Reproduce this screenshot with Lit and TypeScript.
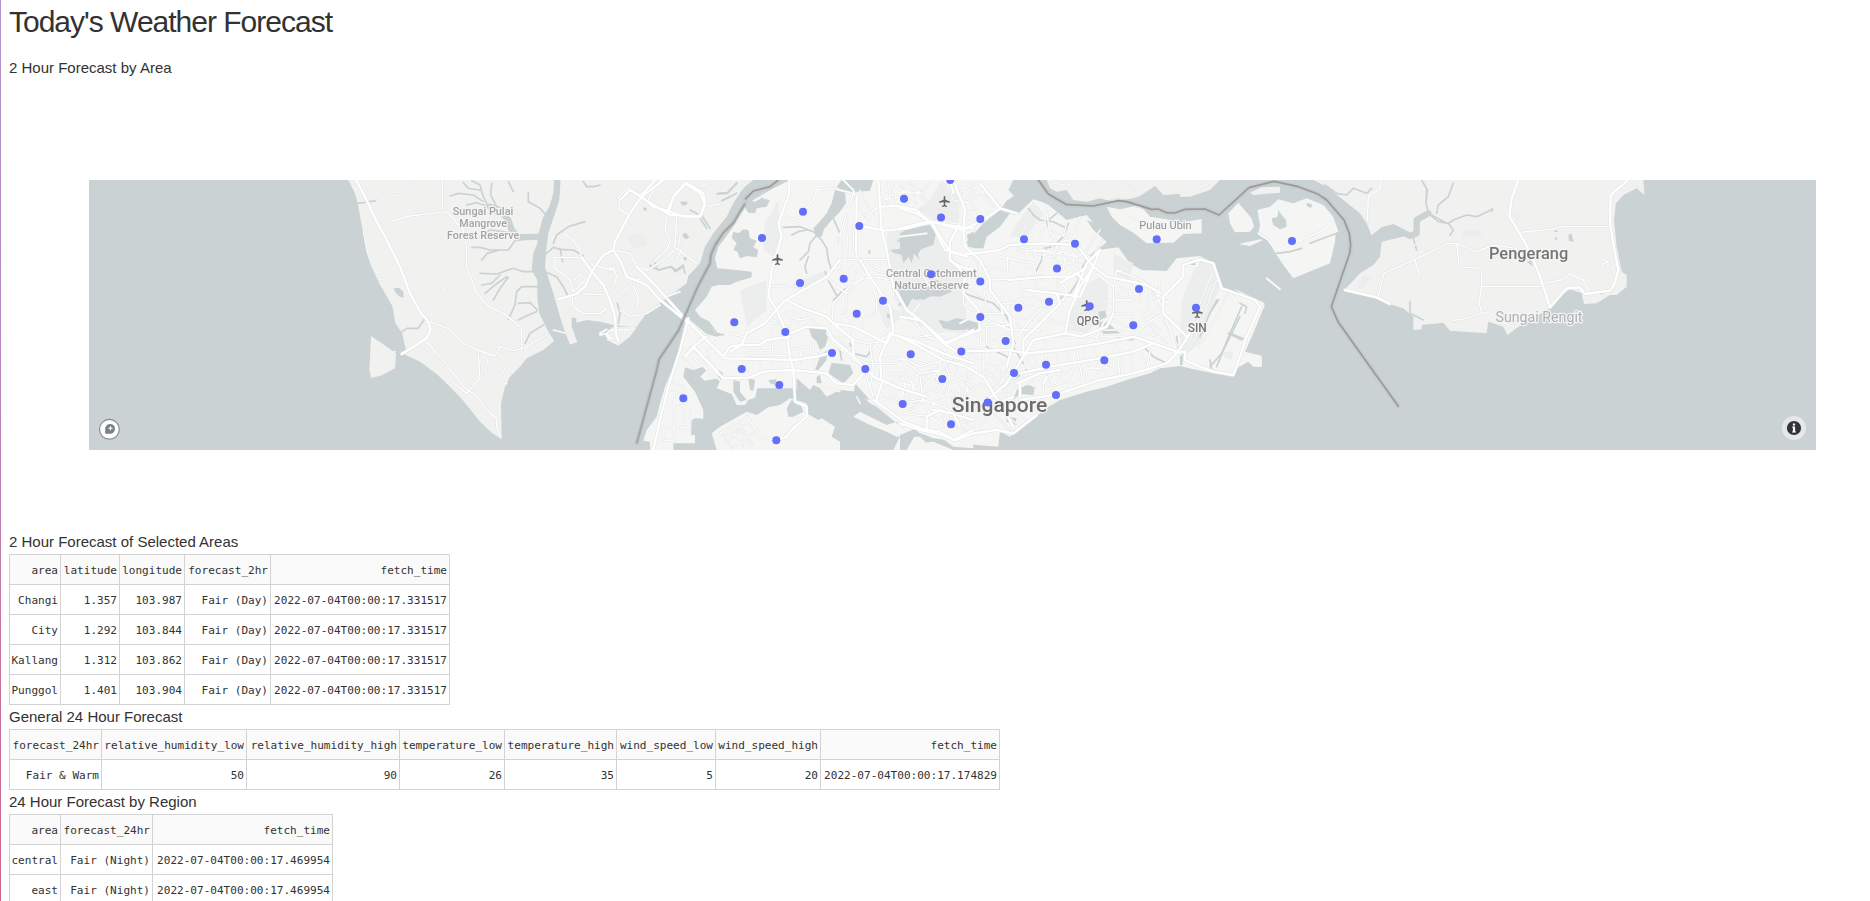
import { LitElement, html, svg, css } from "lit";
import { customElement, property } from "lit/decorators.js";

interface Sheet {
  x: number;
  y: number;
  land?: string;
  city?: string;
  shade?: string;
  lake?: string;
  creek?: string;
  stream?: string;
  major?: string;
  minor?: string;
  street?: string;
  border?: string;
}

// Each map sheet is drawn at three units per pixel, from its own origin.
const SHEETS: Sheet[] = [
  {
    x: 400,
    y: 170,
    land: `M-155 30L-135 70-127 100-112 180-102 240-88 285-63 338-22 410-14 460 6 488 18 540 8 550 22 557 60 575 110 612 150 650 190 692 240 755 275 788 305 808 303 700 315 650 330 620 360 590 380 565 430 540 463 512 445 485 430 455 418 430 412 380 412 330 395 300 400 250 412 220 415 190 430 160 440 130 460 90 468 30Z
      M-87 498L-55 520-12 550-15 595-60 618-87 623-92 600Z
      M480 30L478 90 465 130 445 190 440 230 435 290 447 330 460 370 480 440 495 485 510 524 532 517 515 470 515 443 528 443 530 458 560 450 600 455 640 465 710 472 690 500 655 527 620 510 630 478 640 470 710 470 740 430 800 385 860 340 865 318 900 280 915 230 940 190 980 140 1000 100 1020 70 1020 30Z`,
    shade: `M680 195L730 190 740 225 700 238Z`,
    lake: `M-20 355l18-2 8 10 6 20-12-2-14-14ZM730 112l10 2 0 8-10-2ZM850 190l10 0 8 12-10 6-10-8ZM850 262l10 0 0 10-8-2ZM840 95l22 0 0 8-14 4ZM0 360l10 4 0 14-8 0Z`,
    creek: `M472 30L470 70 458 110 436 150 424 200M424 200L355 202 335 180 325 150 300 120 270 110`,
    stream: `M215 32L240 45 250 80 265 110 285 130M275 40L272 75 290 110 320 155M150 78L175 70 220 75 250 95M190 38L205 55 240 60M200 105L230 98 260 108M290 125L315 118 335 122M240 200L270 180 310 185 340 190M385 68L385 95 420 115 440 137M325 35L340 65M460 220L470 195 505 170 555 155M440 250L460 232 480 238 520 240 550 257M480 235L488 275M215 232L240 232 270 240 325 240 345 212 380 206M245 270L262 250 300 240M240 310L290 312 340 295 370 305 410 305M245 345L275 340 300 315M255 370L285 345 320 320M280 390L300 355 325 322M325 448L345 405 350 365 365 350 415 350M355 400L390 398 412 420M355 450L385 435 410 425M375 520L390 490 430 465M435 305L470 320 490 350 503 377M550 35L560 50 580 50 600 45M750 285L775 300 815 290 825 305 850 290 855 310M760 270L770 290M-125 100L-70 92M0 490L20 475 55 475 75 445M955 70L985 68 1010 38M970 90L990 80 1010 70M920 175L890 130 870 120M652 400L660 430 655 460`,
    street: `M-70 92L-20 77 5 75 35 35M-110 185L-95 255-60 330-30 325 0 320M0 320L30 285M5 75L30 108 60 125M130 350L128 390 100 420 90 445M-45 555L-15 545M70 340L130 355M270 530L255 615M245 618L320 642M320 640L310 605 330 560 370 540M460 480L500 490`,
    minor: `M-30 155L30 138 140 125M140 125L190 180 200 230 200 290 230 370 265 408 310 430 363 472 365 520 365 540M90 455L150 478 190 520 230 540 285 558 300 530 340 542 370 535 440 495M75 510L120 560 160 610 190 650 225 675 270 730 290 745 290 770 302 800M150 630L200 670 240 625 235 550M127 30L127 120M465 262L545 262M465 262L465 295 510 330 520 365 575 310M490 190L515 205 540 240 545 262M640 240L690 250 710 290 745 300 790 270 830 235M520 330L545 310M575 285L640 300 630 290M550 372L610 374M515 375L520 410 550 430 600 430 620 415M640 290L650 320 640 350M660 420L690 440 740 430 780 405M800 130L795 180 812 210 800 240 760 275M830 140L825 232M830 235L890 280M845 235L830 270M740 95L780 30M690 50L655 80 660 120 690 135M840 200L835 230M905 50L920 40M915 110L960 102M680 320L720 330M700 345L715 385 710 415M660 375L685 350M600 495L620 490 640 515 650 520M640 480L690 480M840 365L800 380M625 485l10-6 12 8-2 16-16 4-10-10ZM620 478L600 490`,
    major: `M-132 30L-105 80-75 145-45 200-20 250 0 290 30 370 60 425 85 455 92 480 80 505 40 530 5 552M475 388L530 372 555 350 575 305 610 255 640 240M545 262L580 310 610 345 630 390 645 440 648 490 655 515M640 240L645 215 690 130 725 80 790 30M725 80L690 60 660 90M725 80L760 110 810 125 850 140 900 140 915 100 910 70 860 38 820 80 802 125M640 240L665 280 680 320 740 345 775 385 830 430 860 455`,
    border: `M1035 100L1002 156 970 188 947 222 932 256 930 280 893 350 835 482 777 568 770 600 710 820`,
  },
  {
    x: 640,
    y: 170,
    land: `M265 30L340 30 315 50 290 80 270 110 235 165 200 200 180 250 160 300Z`,
    city: `M450 30L395 58 330 95 300 130 280 170 255 205 235 230 225 265 232 295 290 300 335 305 335 322 290 335 270 345 235 345 215 350 200 380 165 420 180 440 205 455 225 490 255 493 230 500 200 492 150 450 135 455 120 530 100 590 75 650 60 700 50 740 20 780 10 812 30 815 30 840 100 840 100 820 165 820 165 795 153 795 155 750 165 745 190 746 190 720 165 665 130 620 135 592 160 600 190 590 200 600 180 620 195 632 235 625 235 600 250 610 230 655 275 672 290 705 315 705 325 690 345 683 352 655 400 655 450 655 510 660 520 645 540 655 560 680 600 660 650 665 690 700 710 710 770 760 830 780 900 800 940 830 1000 835 1000 30Z
      M215 790L240 770 320 725 350 735 385 712 420 705 450 685 500 700 500 730 535 750 545 745 585 770 575 800 600 815 600 840 230 840Z
      M640 740L660 725 740 765 770 755 795 780 795 797 770 800 740 785 690 765Z
      M800 760L830 775 790 840 760 840ZM830 840L850 818 880 815 940 840Z`,
    shade: `M830 120L870 90 905 30 960 80 960 160 900 150ZM740 190L850 160 900 190 930 260 975 290 980 490 880 480 800 450 760 380 745 280ZM375 160L415 90 420 200 400 260 370 240ZM300 360L380 330 380 420 320 470ZM440 350L560 300 560 320 500 360ZM710 400L800 430 740 480Z`,
    lake: `M280 185L295 190 310 178 325 180 330 205 350 212 340 232 355 240 350 262 320 258 300 265 292 245 280 240 290 220 275 205ZM318 85L345 95 365 85 390 90 380 110 350 115 345 130 325 128 310 105Z
      M605 30L700 30 690 62 640 66 605 60 590 50ZM585 60L615 68 618 100 600 125 575 150 552 178 545 200 530 198 520 175 535 160 560 130 575 100Z
      M800 185L830 170 870 165 888 190 880 225 850 235 830 245 840 270 822 250 815 280 805 260 790 280 785 255 760 248 750 240 790 235 800 215 770 215Z
      M770 355L800 340 850 345 880 335 900 335 930 350 935 365 900 380 870 378 850 390 820 380 800 415 790 400 770 410 790 385 815 370 780 372Z
      M895 450L920 455 950 445 980 450 1000 455 990 475 960 470 940 480 910 475Z
      M505 470L560 480 565 500 555 530 540 540 530 515 515 500ZM575 578L630 585 640 610 610 640 580 620 565 610ZM540 560L560 540 560 570 535 600 525 600ZM530 620L540 615 545 640 530 640Z
      M280 630L300 635 300 665 320 690 300 695 280 665ZM325 625L345 630 340 662 330 660ZM385 630L410 628 405 645 390 640ZM470 625L510 660 470 665ZM645 640L690 690 640 680ZM500 700L545 735 560 725 550 700 520 690ZM980 195L1000 185 1010 220 985 215ZM740 430l12 4 0 12-10-2ZM685 240l6 0 0 12-6 0ZM460 740L490 725 480 700 455 690 440 715 445 740Z`,
    stream: `M430 172L480 170 520 185M455 195L475 185 500 180M520 185L545 210 560 235 565 270 575 300M530 195L510 220 505 245 480 270M505 260L495 290 500 310M365 85L375 100M230 72L260 70 290 40M245 92L270 80M210 175L180 130M30 290L60 300 90 290 110 300 130 285M180 445L205 455 230 490 250 495M580 145L600 190 598 215M555 305L570 340 595 385M630 520L640 550 680 560 690 545M570 500L600 540 605 570M580 390L610 360 630 350`,
    street: `M395 345L440 347 480 350M320 540L395 542 450 537 520 530M320 555L460 557 545 548M395 470L400 600M360 510L360 600M320 530L322 600M420 480L425 600M480 530L485 600M520 520L522 595M395 440L420 435 450 445 480 435 510 445 540 470M400 465L450 470 460 450M410 490L440 470M380 455L410 450 430 470 420 500M430 430L460 425 490 440 470 460M590 290L610 320 640 330 650 300M600 300L640 285M620 330L620 420 600 440M600 200L610 240 600 270M620 200L650 205M620 150L625 270M640 160L640 240M650 80L660 120 680 145M660 60L680 100 690 130 720 140M680 270L700 300 740 310M690 290L720 280M580 440L620 440 650 450M590 460L640 470 680 490M600 440L600 500M630 440L635 520M610 500L660 520M590 500L640 540M600 520L650 560M660 440L670 480M690 320L760 330M710 420L690 440 660 445M740 50L780 70 800 60 820 90M760 40L770 100M800 40L830 60 850 90M730 90L790 80M745 35L750 95M775 35L800 100M735 65L850 70M920 40L940 90 990 100M950 50L1000 60M960 100L960 170M940 150L1000 150M970 40L980 170M940 120L1000 120M775 570L830 575 890 590M720 610L790 610 850 620 880 600M790 620L800 680 850 700M760 610L750 680 800 700M810 610L820 660M850 630L860 670 840 700M890 650L940 670 1000 650M880 700L940 720M870 740L950 750 1000 740M900 690L910 740M720 650L790 660M730 680L780 700M790 640L840 650M820 500L880 510M900 640L910 600 940 570M800 630L820 640 815 670 790 675ZM930 610L1000 620M950 580L960 680M980 600L985 690M150 530L200 580M180 505L150 560M120 555L160 590M80 665L140 675M85 700L150 710 150 780M105 660L100 780M130 690L130 780M65 770L150 773M70 775L70 812 103 812 103 775M95 635L130 650 140 690M240 790L320 740M250 800L320 760 350 780M260 820L300 780 330 830M280 830L340 790M320 735L350 790M270 775L310 830M240 785L280 838M295 760L340 825M540 650L600 665M960 730L1000 770M940 740L980 790M200 560L225 590M660 700L650 680`,
    minor: `M490 125L485 155 440 140M490 125L520 90 530 60 580 55 640 70M380 350L440 347M270 490L310 500 360 470M450 440L480 450 520 440M560 320L590 350 620 370 680 310M590 270L740 268M600 190L600 290 580 300M640 70L620 130 600 200M640 60L650 100 650 260 680 310 700 350 710 390 710 440 750 490M740 100L700 120 680 150 650 165M720 180L720 100M600 20L640 60M580 400L640 340 690 320 760 330 760 380M575 460L580 400M250 500L200 540M130 540L240 630M560 490L580 520 640 570 700 610M640 510L680 520 720 515 760 480M640 560L680 580 760 580M680 620L700 680M690 520L700 600 690 650M320 740L360 800 410 812M840 620L850 700M900 540L900 600 850 650M730 500L700 530 740 560 790 570 840 610 900 600M880 610L900 640M920 520L910 560M850 320L870 350M970 340L970 400 1000 420M960 460L1000 440M840 400L810 440`,
    major: `M-10 290L40 340 130 440 250 560M45 30L0 80 90 135 180 140 195 105 180 70 135 40 100 80 85 130M145 445L120 540 85 650 60 750 40 840M135 560L160 530 200 500M250 565L400 568 460 570 530 560 575 548M160 530L250 625 330 622 370 605 460 600 560 610 590 640 640 645 680 600M250 560L270 530 305 525 320 490 375 460 430 395 480 365 560 320 600 270M270 545L305 525 360 525 380 510 450 500M448 30L448 70 415 160 425 200 395 300 385 380 410 420 440 490 450 560 460 600 465 695M465 695L500 710 500 740 460 775 440 800 410 812M440 390L490 415 560 440 580 460 640 470 700 500 740 520 760 480 750 410 690 320 660 270M715 30L725 180 740 240 760 350 800 420 840 450 920 520 1000 480M720 110L770 108 830 120 880 165 930 245 980 260M650 165L730 182 800 175 880 155 920 165 1000 175M650 80L648 250M750 490L720 560 725 640 710 690M750 490L830 515 910 550 1000 580M450 490L500 470 560 475 580 510 640 560 700 620 780 655 860 680M580 460L640 510 640 560M700 690L750 725 790 755 860 780 900 785 940 810 1000 780M860 780L860 740 900 720 1000 750M960 160L930 215 930 270 960 290 1000 300`,
    border: `M415 30L390 50 340 63 315 88`,
  },
  {
    x: 900,
    y: 170,
    land: `M440 30L450 55 470 65 500 60 520 90 560 95 600 85 640 95 700 85 720 78 765 48 790 75 870 70 890 50 925 45 930 30Z`,
    city: `M0 30L340 30 325 60 342 78 320 92 300 120 350 135 400 88 440 100 500 150 560 135 590 170 620 215 595 240 655 232 690 280 725 300 800 303 830 265 900 258 940 280 965 350 1020 370 1095 405 1080 440 1060 490 1035 545 1085 557 1085 590 1060 590 1045 575 1010 595 1000 620 940 610 880 598 840 588 780 595 750 610 680 630 620 650 560 665 480 690 430 720 410 740 330 800 300 785 295 830 230 825 175 815 100 805 50 785 0 770Z
      M0 800L60 800 100 840 0 840ZM620 110L660 118 720 105 750 140 800 148 830 160 905 147 905 190 850 192 820 218 740 220 700 188 660 165 635 140Z`,
    shade: `M500 480L510 430 560 340 600 320 625 350 620 440 590 460 560 490ZM60 120L100 90 130 60 180 90 180 155 100 150ZM845 390L900 260 940 280 960 350 940 400 900 520 850 560 840 500ZM350 160L400 95 430 130 380 200 330 200ZM640 250L700 280 690 330 640 310ZM0 180L100 180 140 250 190 290 190 420 130 490 40 460 0 400ZM150 680L200 670 210 710 160 720Z`,
    lake: `M200 215L250 160 300 120 330 130 300 170 260 200 250 235 225 235 205 230ZM0 190L40 165 90 180 100 220 70 225 50 260 35 240 20 270 0 240ZM0 350L60 345 110 330 150 350 130 370 100 378 50 390 20 380 10 410 0 400ZM120 450L150 458 200 450 240 460 230 480 190 480 150 480ZM350 660L380 645 405 650 400 675 360 672 340 690ZM595 425L615 422 620 440 600 450ZM590 455L620 455 660 490 610 492ZM560 150L600 165 650 205 620 215 580 180ZM770 205L780 200 780 220 770 218ZM415 90L450 60 500 90 570 105 620 120 560 134 500 142 460 112ZM0 795L60 770 20 840 0 840ZM870 270l15 0 0 20-10 0ZM320 740L350 745 345 765 320 755ZM840 560l8-10 0 35-8 0Z`,
    stream: `M385 115L400 135 420 150 460 155 500 175M470 130L440 155 445 170M505 160L490 200 460 230 430 235M430 240L425 270 405 310M545 310L530 340 510 370 480 385M190 368L220 380 280 400 320 440 330 480 345 520M340 530L370 580M730 530L760 560 800 580M830 500L835 550M950 390L925 440 900 500M1020 440L965 550 930 590M985 490L1025 510M260 530L330 565M650 500L690 510 720 500M600 230L560 270 530 320M340 630L380 600M210 700L270 720`,
    street: `M190 40L240 60 280 110M200 100L260 60M190 70L230 120 220 150M200 130L260 150M230 50L200 90M210 35L300 105M160 40L190 80M0 60L60 70 90 40M20 100L60 60M0 40L50 100M30 35L80 90M350 230L530 260M380 240L375 310M350 250L440 240M350 240L530 250M400 250L500 270M405 235L402 262M430 230L430 330M460 210L455 260M480 230L475 300M500 220L490 300M520 240L520 320M470 260L550 280M480 280L560 300M470 240L540 262M540 240L520 270M380 160L360 200M400 150L470 190 530 200M440 130L420 200M540 140L520 210M600 180L560 240M610 210L570 270M450 200L440 120M500 160L490 200M250 340L260 420 320 430M200 350L240 380M210 420L260 440M330 370L330 440 400 450M340 390L400 380 440 400M360 340L370 380M280 360L290 400 340 400M400 320L410 350 480 370M470 330L480 380M430 400L450 450 520 470M260 490L320 490 340 530M250 510L310 510 330 500M270 480L270 560M300 480L300 540M220 560L280 590 320 580M250 550L250 620M200 600L260 620 300 600M150 610L200 640 250 650M180 650L230 680 290 670M210 620L190 690M0 620L40 640 60 690 30 720M20 600L30 660M0 660L50 660M50 610L60 650M10 640L45 655 40 690 10 690ZM100 580L110 640M80 660L140 670M130 700L240 740M110 720L200 760M150 700L130 760M180 700L170 770M230 700L210 770M260 730L240 780M280 730L330 780M300 720L360 770M320 710L380 750M240 640L340 700M260 600L330 680M280 590L350 650M300 570L370 620M290 690L350 620M260 680L320 600M275 690L335 610M310 700L370 610M340 540L400 560M350 580L400 600M380 530L390 640M410 550L400 650M430 540L450 640M470 550L480 640M500 530L520 640M550 520L560 620M580 520L600 630M620 550L620 610M635 545L645 605M660 540L670 620M690 540L700 600M720 540L740 590M440 620L540 600 640 590M450 650L520 630M560 590L620 600M600 500L680 500M620 520L720 500M600 480L670 480M660 320L740 350 780 400M660 350L720 380M650 380L720 370M640 430L700 430M640 450L680 470M700 320L690 380M730 330L720 400M750 350L740 450M780 330L770 420M720 420L780 440M730 440L780 480M740 460L800 520M720 490L780 500M690 500L760 520M700 430L700 480M720 345L780 360M760 390L800 395M600 390L640 400M840 460L790 430M860 500L940 300M870 510L935 340M880 520L950 330M900 530L990 360M790 450L840 540M570 40L600 60 650 50M700 60L680 40M460 40L500 45 540 35M690 140L760 180 850 160M210 250L240 290 230 330M250 290L320 300M345 270L400 300M200 480L235 500M150 530L240 535M400 410L420 460M350 460L380 500M360 400L420 420M440 500L600 505`,
    minor: `M0 200L80 190M240 260L240 340 270 360M320 240L325 330M200 320L290 330 400 320 440 320M190 365L240 330 270 290 300 260 400 280 410 330M310 360L300 400 310 440 330 470 340 540M240 440L330 480 420 480M360 540L360 490 390 450 440 400 490 390M490 390L500 360 480 330M460 260L475 220 500 210 580 270M590 310L640 350 640 430 610 460 590 500M650 300L700 320 740 340 770 370 790 430M650 300L640 350M770 370L800 400 840 320 850 290M790 430L740 460 700 500M790 430L810 480 830 540M585 500L600 520 700 500M700 390L640 390M240 490L245 540 200 550M130 570L190 580 240 550M130 570L150 620 100 700 70 760M0 560L60 590 130 570M140 680L150 640 200 620M150 630L110 630M260 520L260 470 330 465M0 700L70 690 130 710 190 750M10 730L90 740 130 770M530 540L550 640M430 510L440 570 450 630M650 530L660 620M750 540L740 600M390 590L430 640 430 680M200 640L260 690M310 430L240 430M60 500L130 490 150 510M40 450L80 500 140 520M900 265L890 290 850 285M990 365L1010 400`,
    major: `M0 115L50 130 95 160 135 240 190 255 300 240 330 225 430 220 530 225 580 290 620 320 740 345 780 370M0 175L60 160 95 155 190 180 250 150 300 115 240 40M160 30L195 120 190 185 195 230 240 270 270 330 270 360 300 400 330 440 340 520 320 590M150 240L150 270 195 310 190 370 235 420 240 480 130 520M0 500L60 530 130 570 200 590 250 620 300 700 340 770M0 440L60 450 130 520 170 545 330 540 380 550 480 540 600 520 700 500 760 520 830 545M300 115L350 130M160 70L150 30M580 290L540 350 510 420 495 490 450 500 400 510 370 560 320 640 250 700M495 490L545 500 620 470 640 430M325 330L440 320 520 320 560 290M380 360L470 370 480 400 420 460 370 510 370 550M470 370L540 380 580 290 600 240M600 240L560 280 520 380M360 690L430 680 480 670 600 630 700 610 800 580 830 550 870 490M0 760L60 780 110 790 170 810 220 790 290 780 340 790 410 735M360 610L450 590 600 565 700 545 760 520M350 640L420 610 480 600M180 770L160 730 100 720M260 740L290 700 340 680M825 550L855 545 855 570 900 590 940 605 1000 615 1010 590 1040 500 1080 410 1065 390 965 355 940 280 900 268 850 285 850 320 790 380 790 430 860 500M480 340L530 310 550 330M360 640L360 680M430 640L440 620`,
    border: `M415 30L445 72 498 103 580 108 655 92 680 95 755 118 775 117 800 128 825 129 855 118 915 117 957 135 1047 53 1122 34`,
  },
  {
    x: 1180,
    y: 170,
    land: `M400 30L440 50 490 90 540 130 560 160 575 197 610 170 640 165 690 195 605 215 600 260 580 285 540 310 495 358 590 385 620 400 670 415 700 440 700 480 725 478 725 465 790 458 810 482 920 490 925 455 970 470 982 495 1020 467 1110 415 1140 380 1170 358 1205 370 1212 402 1250 400 1290 375 1310 375 1340 350 1340 315 1325 305 1310 230 1302 150 1308 100 1330 75 1370 55 1394 75 1390 30Z
      M210 68L245 52 300 50 300 68 220 75ZM0 30L120 30 90 60 30 80 0 80Z`,
    city: `M232 120L270 110 295 88 340 100 380 85 430 105 460 140 475 185 467 190 465 215 450 280 340 325 310 285 290 255 262 210 235 190 240 165ZM145 130L175 98 215 145 222 170 210 185 165 187 150 160ZM175 222L240 208 250 210 210 228ZM160 355L255 400 240 410ZM200 560L245 560 245 590 232 590 232 575 205 575Z`,
    shade: `M550 315L575 320 550 355 530 350ZM995 120L1020 140 1010 155ZM900 180L910 200 850 200 845 180ZM130 545L160 545 155 570 130 560Z`,
    lake: `M275 145L292 142 295 120 305 135 318 150 320 170 300 178 280 165ZM380 98l18 6-6 10-12-6ZM1120 185l12-6 0 8ZM1165 195l10-4 6 24-14-2ZM1123 205l8-4 0 12ZM930 118l8-4 0 14ZM1040 275l14-4 4 18-8-6ZM1255 368l20-2-10 8Z`,
    creek: `M575 208L610 180 640 172 690 198 710 190 710 150 745 130`,
    stream: `M725 30L742 60 738 100 745 130 775 155 805 160 820 150 860 135 890 140 938 118M740 60L738 100 745 130 800 160M805 160L820 180 810 195M770 130L775 105 805 80 820 40M435 45L470 70 500 75 520 55 560 70 575 55M390 220L430 205 470 190M290 250L330 245 365 235M700 205L710 240M690 395L690 430 730 450M180 400L200 410 195 430M185 410L150 490 110 590M150 490L200 510M115 390L95 420M90 570L95 595`,
    street: `M700 230L730 200 740 165M1065 340L1062 380 1045 400 1050 420M20 40L60 50 90 40M1284 330L1336 350M1360 40L1385 65`,
    minor: `M720 320L705 270M595 380L612 310 705 268 755 245 800 222 830 220 890 245 940 225 1010 235M830 220L838 290 905 295 905 350 1090 350M905 350L897 400 905 425M820 452L860 445 905 428 930 430 960 455 1000 470M1020 187L1110 178 1150 170 1290 170M1090 340L1145 330 1170 312 1210 330 1230 370M603 30L600 55 565 80 562 150M290 240L330 225 390 200 420 185 460 155M235 190L265 210 290 240M1265 268L1285 275 1265 285M260 325L300 358M1295 300L1310 275`,
    major: `M1015 30L995 85 988 138 1010 175 1050 245 1080 320 1110 412 1160 355 1200 352 1215 372 1290 362 1302 345 1315 300 1305 250 1290 160 1292 75 1342 32M495 360L590 382 630 402`,
    border: `M282 34L355 50 415 73 440 90 492 150 508 190 512 225 509 250 495 290 454 410 475 457 656 710`,
  },
];

// Pin centres in map pixels.
const PINS: [number, number][] = [
  [803, 211.7], [762, 238], [800, 283], [734.3, 322.3], [785.3, 332], [741.7, 369], [779.3, 385],
  [683.3, 398.3], [776.3, 440.3], [832, 353], [865.3, 369], [856.7, 313.7], [843.7, 278.7],
  [859.3, 226], [883, 300.7], [910.7, 354.3], [902.7, 404], [942.3, 379], [961.3, 351.5],
  [951, 424.3], [904, 198.7], [941, 217.5], [931, 274.3], [950.3, 180], [980.3, 219],
  [1024, 239.3], [1075, 243.7], [1057, 268.6], [980.3, 281.6], [980.3, 317], [1018.3, 307.8],
  [1049, 301.7], [1089.7, 306.3], [1139, 289], [1133.3, 325.3], [1005.7, 341], [1046, 364.7],
  [1014, 373], [1104.3, 360.3], [1056, 395], [987.7, 402.4], [1156.7, 239.3], [1196, 307.8],
  [1292, 241],
];

const AIRPORTS: [number, number][] = [
  [944.5, 201.5], [777.5, 259.5], [1086.7, 305.5], [1197.3, 312.5],
];

interface Label { t: string; x: number; y: number; w: number; c: string; s: number; }

const LABELS: Label[] = [
  { t: "Sungai Pulai", x: 452.7, y: 215, w: 60.6, c: "park", s: 11.3 },
  { t: "Mangrove", x: 459.3, y: 227, w: 47.7, c: "park", s: 11.3 },
  { t: "Forest Reserve", x: 447, y: 239, w: 72.3, c: "park", s: 11.3 },
  { t: "Central Catchment", x: 886, y: 277, w: 90.5, c: "park", s: 11.3 },
  { t: "Nature Reserve", x: 894.3, y: 289, w: 74.4, c: "park", s: 11.3 },
  { t: "Pulau Ubin", x: 1139.3, y: 229.3, w: 52.2, c: "isle", s: 11.7 },
  { t: "QPG", x: 1076.7, y: 324.6, w: 22.3, c: "air", s: 12 },
  { t: "SIN", x: 1187.7, y: 332, w: 19, c: "air", s: 12.5 },
  { t: "Singapore", x: 951.7, y: 412.4, w: 95.5, c: "city-name", s: 20.5 },
  { t: "Pengerang", x: 1489, y: 258.8, w: 79.2, c: "town", s: 16.5 },
  { t: "Sungai Rengit", x: 1495.5, y: 322.4, w: 87, c: "village", s: 14.6 },
];

const layer = (key: keyof Sheet, cls: string) => svg`<g class=${cls}>${SHEETS.map((s) =>
  s[key] ? svg`<path transform="translate(${s.x} ${s.y}) scale(.33333)" d=${s[key] as string}></path>` : null
)}</g>`;

@customElement("area-map")
class AreaMap extends LitElement {
  static styles = css`
    :host { display: block; width: 1727px; height: 270px; }
    svg { display: block; }
    .land { fill: #f1f1f0; }
    .city { fill: #f5f5f3; }
    .shade { fill: #eceded; }
    .lake { fill: #cad2d3; }
    .creek, .stream, .major, .casing, .minor, .mcase, .street, .scase, .border, .glow {
      fill: none; stroke-linejoin: round; stroke-linecap: round;
    }
    .creek { stroke: #cad2d3; stroke-width: 19; }
    .stream { stroke: #cad2d3; stroke-width: 5; }
    .casing { stroke: #e1e4e4; stroke-width: 10; }
    .major { stroke: #fff; stroke-width: 7; }
    .mcase { stroke: #dfe3e3; stroke-width: 7; }
    .minor { stroke: #fff; stroke-width: 4.2; }
    .scase { stroke: #e2e5e5; stroke-width: 5.5; }
    .street { stroke: #fff; stroke-width: 2.8; }
    .glow { stroke: #c2c4c3; stroke-width: 14; opacity: .5; }
    .border { stroke: #9b9a9a; stroke-width: 5; stroke-linecap: butt; }
    .pin { fill: #636efa; }
    .plane { fill: #666; stroke: #f4f4f4; stroke-width: .6; paint-order: stroke; }
    text { font-family: Roboto, "Noto Sans", sans-serif; paint-order: stroke; stroke: #f5f5f4; stroke-width: 2.4px; stroke-linejoin: round; }
    .park { fill: #a3a3a3; font-weight: 500; }
    .isle { fill: #929292; }
    .air { fill: #757575; font-weight: 500; }
    .city-name { fill: #6c6c6c; font-weight: 500; }
    .town { fill: #757575; font-weight: 500; }
    .village { fill: #b0b0b0; stroke: #f3f5f5; }
  `;

  render() {
    return html`<svg width="1727" height="270" viewBox="89 180 1727 270">
      <rect x="89" y="180" width="1727" height="270" fill="#cad2d3"></rect>
      ${layer("land", "land")} ${layer("city", "city")}
      ${layer("shade", "shade")} ${layer("lake", "lake")}
      ${layer("creek", "creek")} ${layer("stream", "stream")}
      ${layer("street", "scase")} ${layer("street", "street")}
      ${layer("minor", "mcase")} ${layer("minor", "minor")}
      ${layer("major", "casing")} ${layer("major", "major")}
      ${layer("border", "glow")} ${layer("border", "border")}
      ${AIRPORTS.map(([x, y]) => svg`<path class="plane" transform="translate(${x} ${y})"
        d="M0-5.6C.8-5.6.9-4.6.9-3.8L.9-1.8 5.4.1 5.4 1.2.9.7.7 3.6 2.6 4.6 2.6 5.4 0 5-2.6 5.4-2.6 4.6-.7 3.6-.9.7-5.4 1.2-5.4.1-.9-1.8-.9-3.8C-.9-4.6-.8-5.6 0-5.6Z"></path>`)}
      ${LABELS.map((l) => svg`<text class=${l.c} x=${l.x} y=${l.y} font-size=${l.s}
        textLength=${l.w} lengthAdjust="spacingAndGlyphs">${l.t}</text>`)}
      ${PINS.map(([x, y]) => svg`<circle class="pin" cx=${x} cy=${y} r="4"></circle>`)}
      <g transform="translate(109.4 429.3)">
        <circle r="9.9" fill="#fff" stroke="#868e8f" stroke-width="1.2"></circle>
        <path d="M-4.2 4.4V0A4.9 4.9 0 1 1 .8 4.4Z" fill="#7b8182"></path>
        <path d="M1.1-3.7L1.8-1.7 3.8-1 1.8-.3 1.1 1.7.4-.3-1.6-1 .4-1.7Z" fill="#fff"></path>
      </g>
      <g transform="translate(1794 428)">
        <circle r="12" fill="#e4e8e9"></circle>
        <circle r="7.1" fill="#333"></circle>
        <path d="M-1.1-4.5H1.1V-2.4H-1.1ZM-1.9-1.4H1.1V3.4H2V4.4H-2V3.4H-1.1V-.5H-1.9Z" fill="#fff"></path>
      </g>
    </svg>`;
  }
}

@customElement("data-grid")
class DataGrid extends LitElement {
  @property({ attribute: false }) widths: number[] = [];
  @property({ attribute: false }) rows: string[][] = [];

  static styles = css`
    :host { display: block; }
    table {
      border-collapse: collapse; table-layout: fixed;
      font: 11.05px/14px "DejaVu Sans Mono", monospace; color: #323232;
    }
    th, td {
      box-sizing: border-box; height: 30px; padding: 2px 2px 0 0; text-align: right;
      font-weight: 400; white-space: nowrap; border: 1px solid #d3d3d3;
    }
    th { background: #fafafa; }
  `;

  render() {
    const [head, ...body] = this.rows;
    return html`<table style="width:${this.widths.reduce((a, b) => a + b, 1)}px">
      <colgroup>${this.widths.map((w) => html`<col style="width:${w}px">`)}</colgroup>
      <thead><tr>${head.map((h) => html`<th>${h}</th>`)}</tr></thead>
      <tbody>${body.map((r) => html`<tr>${r.map((c) => html`<td>${c}</td>`)}</tr>`)}</tbody>
    </table>`;
  }
}

const T2 = "2022-07-04T00:00:17.331517";
const T24 = "2022-07-04T00:00:17.469954";

@customElement("app-root")
class AppRoot extends LitElement {
  static styles = css`
    :host { display: block; height: 901px; overflow: hidden; background: #fff; }
    .page {
      box-sizing: border-box; height: 901px; padding-left: 9px; overflow: hidden;
      background: linear-gradient(#b094cf, #ba86bd 45%, #d0648a) left / 1px 100% no-repeat;
      font: 15px/24px "Liberation Sans", Arial, sans-serif; color: #323232;
    }
    h1 { margin: 0 0 17px; font-size: 30px; line-height: 39px; padding-top: 2px; font-weight: 400; letter-spacing: -1px; }
    .caption { height: 24px; }
    .lead { margin-top: -2px; }
    .chart { padding: 100px 0 80px 80px; }
  `;

  render() {
    return html`<div class="page">
      <h1>Today's Weather Forecast</h1>
      <div class="caption lead">2 Hour Forecast by Area</div>
      <div class="chart"><area-map></area-map></div>
      <div class="caption">2 Hour Forecast of Selected Areas</div>
      <data-grid .widths=${[51, 59, 65, 86, 179]} .rows=${[
        ["area", "latitude", "longitude", "forecast_2hr", "fetch_time"],
        ["Changi", "1.357", "103.987", "Fair (Day)", T2],
        ["City", "1.292", "103.844", "Fair (Day)", T2],
        ["Kallang", "1.312", "103.862", "Fair (Day)", T2],
        ["Punggol", "1.401", "103.904", "Fair (Day)", T2],
      ]}></data-grid>
      <div class="caption">General 24 Hour Forecast</div>
      <data-grid .widths=${[92, 145, 153, 105, 112, 99, 105, 179]} .rows=${[
        ["forecast_24hr", "relative_humidity_low", "relative_humidity_high", "temperature_low", "temperature_high", "wind_speed_low", "wind_speed_high", "fetch_time"],
        ["Fair & Warm", "50", "90", "26", "35", "5", "20", "2022-07-04T00:00:17.174829"],
      ]}></data-grid>
      <div class="caption">24 Hour Forecast by Region</div>
      <data-grid .widths=${[51, 92, 180]} .rows=${[
        ["area", "forecast_24hr", "fetch_time"],
        ["central", "Fair (Night)", T24],
        ["east", "Fair (Night)", T24],
      ]}></data-grid>
    </div>`;
  }
}
